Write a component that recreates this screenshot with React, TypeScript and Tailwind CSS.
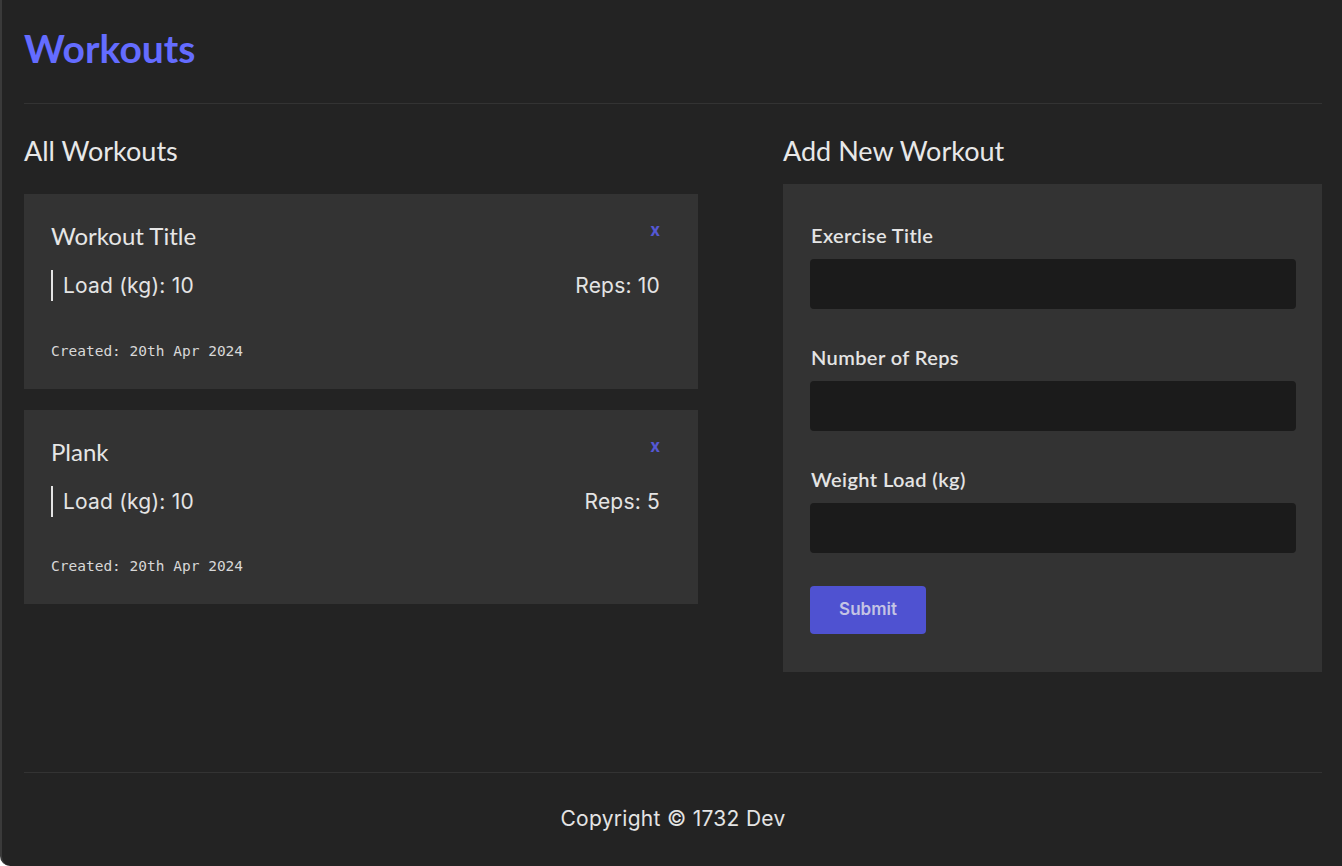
import React from 'react';

interface Workout {
  id: number;
  title: string;
  load: number;
  reps: number;
  created: string;
}

const workouts: Workout[] = [
  { id: 1, title: 'Workout Title', load: 10, reps: 10, created: '20th Apr 2024' },
  { id: 2, title: 'Plank', load: 10, reps: 5, created: '20th Apr 2024' },
];

const heading = "font-['Lato',sans-serif]";
const body = "font-['Inter',sans-serif]";

const WorkoutCard: React.FC<{ workout: Workout }> = ({ workout }) => (
  <div className="bg-[#333333] pl-[27px] pr-[38px] pt-[28px] pb-[30px]">
    <div className="flex items-start justify-between">
      <h3 className={`${heading} text-[24px] leading-[28px] text-[#e6e6e6]`}>{workout.title}</h3>
      <button className={`${body} text-[17px] font-bold leading-[16px] text-[#5558d4]`}>x</button>
    </div>
    <div className={`${body} mt-[20px] flex items-center justify-between text-[21px] tracking-[0.2px] text-[#e4e4e4]`}>
      <span className="border-l-2 border-[#e4e4e4] pl-[10px] leading-[31px]">Load (kg): {workout.load}</span>
      <span>Reps: {workout.reps}</span>
    </div>
    <p className="mt-[41px] font-['DejaVu_Sans_Mono',monospace] text-[14.5px] leading-[16px] text-[#d8d8d8]">
      Created: {workout.created}
    </p>
  </div>
);

const Field: React.FC<{ label: string; first?: boolean }> = ({ label, first }) => (
  <div className={first ? '' : 'mt-[36px]'}>
    <label className={`${heading} block pl-px text-[20px] font-semibold leading-[24px] tracking-[0.4px] text-[#e4e4e4]`}>{label}</label>
    <input className="mt-[12px] block h-[50px] w-full rounded-[4px] bg-[#1b1b1b] px-3 text-white outline-none" />
  </div>
);

export default function App() {
  return (
    <div className="flex h-screen flex-col rounded-bl-[10px] border-l-2 border-[#3a3a3a] bg-[#232323] pl-[22px] pr-[20px]">
      <header className="border-b border-[#333333] pt-[24px] pb-[31px]">
        <h1 className={`${heading} text-[39px] font-bold leading-[48px] text-[#646cff]`}>Workouts</h1>
      </header>

      <main className="grid flex-1 grid-cols-[674px_1fr] gap-[85px] pt-[31px]">
        <section>
          <h2 className={`${heading} text-[27px] leading-[31px] text-[#e8e8e8]`}>All Workouts</h2>
          <div className="mt-[28px] space-y-[21px]">
            {workouts.map((w) => (
              <WorkoutCard key={w.id} workout={w} />
            ))}
          </div>
        </section>

        <section>
          <h2 className={`${heading} text-[27px] leading-[31px] text-[#e8e8e8]`}>Add New Workout</h2>
          <form className="mt-[18px] bg-[#333333] pl-[27px] pr-[26px] pt-[39px] pb-[38px]">
            <Field label="Exercise Title" first />
            <Field label="Number of Reps" />
            <Field label="Weight Load (kg)" />
            <button
              type="button"
              className={`${body} mt-[33px] h-[48px] w-[116px] rounded-[4px] bg-[#4f52d1] text-[17px] font-semibold text-[#c4c4e4]`}
            >
              Submit
            </button>
          </form>
        </section>
      </main>

      <footer className={`${body} border-t border-[#333333] pt-[34px] pb-[35px] text-center text-[21px] leading-[24px] tracking-[0.3px] text-[#e4e4e4]`}>
        Copyright © 1732 Dev
      </footer>
    </div>
  );
}
